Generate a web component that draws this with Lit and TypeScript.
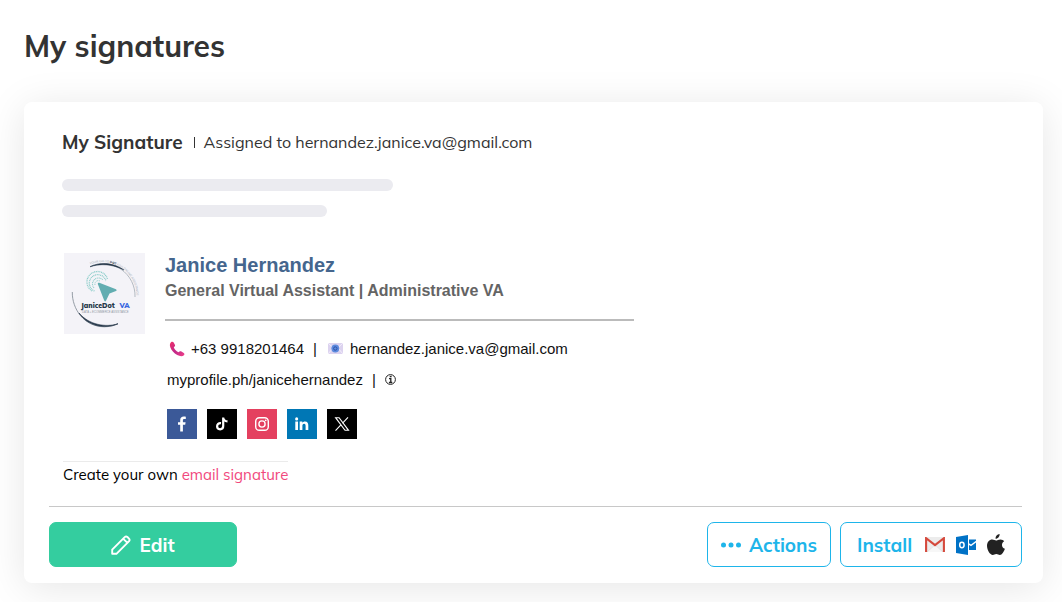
import { LitElement, html, css, svg } from "lit";
import { customElement } from "lit/decorators.js";

const logo = svg`
<svg class="logo" viewBox="0 0 81 81" role="img" aria-label="JaniceDot VA">
  <defs>
    <path id="ring" d="M26 11.500 A34 34 0 0 1 72.500 45" />
  </defs>
  <rect width="81" height="81" fill="#f4f3f8" />
  <path d="M26 13.500 A32 32 0 0 1 71 44" fill="none" stroke="#a3abb4" stroke-width=".8" />
  <path d="M26 13.800 C34 9.500 48 8.500 60 17 C48 10.800 36 10.500 26 13.800Z" fill="#26384a" stroke="#26384a" stroke-width=".5" />
  <path d="M8.300 39 C8 56 20 73.500 40 73.800 C46 73.800 50 72.500 54 70.500" fill="none" stroke="#7c8791" stroke-width=".8" />
  <path d="M15 60 C23 72.500 40 77 54 70.800 C42 74.500 25 72 15 60Z" fill="#26384a" stroke="#26384a" stroke-width=".6" />
  <g fill="none" stroke="#8ccdca" stroke-dasharray="1 .7">
    <path d="M31 32 A3.500 3.500 0 0 1 36 28" stroke-width="1" />
    <path d="M30 35 A6 6 0 0 1 39 27" stroke-width="1.100" />
    <path d="M30.500 38 A8.500 8.500 0 1 1 42 28" stroke-width="1.300" />
    <path d="M28 38 A10.500 10.500 0 1 1 43.500 26" stroke-width="1.300" />
  </g>
  <path d="M33.800 31 Q33.500 29.300 35.300 29.800 L52 36.300 Q53.500 37.200 52 38 L45.500 40.500 L42 47.800 Q41.200 49 40.300 47.800Z" fill="#62adb1" />
  <text font-family="Liberation Sans" font-size="3" fill="#a3abb4"><textPath href="#ring">YOUR GO-TO <tspan font-weight="bold" fill="#26384a">DOT</tspan> FOR ONLINE ASSISTANCE</textPath></text>
  <text x="17" y="55" font-family="Mulish, Lato" font-weight="900" font-size="7" fill="#26384a">JaniceDot</text>
  <text x="55.500" y="55" font-family="Mulish, Lato" font-weight="900" font-size="7" fill="#3566e0">VA</text>
  <text x="18" y="59.500" font-family="Liberation Sans" font-size="2.800" fill="#8f98a2">DATA + ECOMMERCE ASSISTANCE</text>
</svg>`;

const phoneIcon = svg`
<svg class="phone" viewBox="0 0 16 16" aria-hidden="true">
  <defs><linearGradient id="pg" x1="0" y1="0" x2="1" y2="1"><stop offset="0" stop-color="#f0306a" /><stop offset=".5" stop-color="#c02888" /><stop offset="1" stop-color="#f04088" /></linearGradient></defs>
  <path d="M2 1.200 C3 .5 4 .6 4.700 1.500 L6 4 C6.300 5 5.600 5.600 4.800 6.300 C5.500 8.600 7.500 10.600 9.600 11.300 C10.300 10.300 11 9.900 12 10.300 L14.800 12 C15.600 12.700 15.600 13.600 14.900 14.300 C13.500 15.700 10.800 15.500 8.200 14.100 C4.900 12.300 2.300 9.300 1.300 6.300 C.6 4.200.8 2.300 2 1.200Z" fill="url(#pg)" />
</svg>`;

const mailIcon = svg`
<svg class="mail" viewBox="0 0 15 11" aria-hidden="true">
  <rect width="15" height="11" fill="#dcd3ef" />
  <path d="M0 0 L7.500 7 L15 0 M0 11 L5 5 M15 11 L10 5" fill="none" stroke="#f3edfb" />
  <circle cx="7.300" cy="5.500" r="3.900" fill="#5c8ade" />
  <circle cx="7.300" cy="5.500" r="1.700" fill="none" stroke="#2b4fa5" stroke-width="1" />
</svg>`;

const infoIcon = svg`
<svg class="info" viewBox="0 0 11 11" aria-hidden="true">
  <circle cx="5.500" cy="5.500" r="4.900" fill="none" stroke="#222" stroke-width="1" />
  <rect x="4.700" y="1.800" width="1.900" height="1.500" fill="#222" />
  <path d="M4 4.600 H5.800 V8.300 M3.900 8.500 H7.300" fill="none" stroke="#222" stroke-width="1.300" />
</svg>`;

const socials = [
  { name: "Facebook", cls: "facebook", art: svg`<path fill="#fff" d="M13.200 22.500V15.800H11V13.200h2.200v-2c0-2.400 1.400-3.700 3.600-3.700.9 0 1.700.1 2 .2v2.300h-1.500c-1.100 0-1.400.6-1.400 1.400v1.800h2.700l-.4 2.600h-2.300v6.700z" />` },
  { name: "TikTok", cls: "tiktok", art: svg`<path fill="none" stroke="#fff" stroke-width="2.200" d="M14 14.200c-2.500-.3-3.900 1.200-3.900 3.100 0 1.800 1.300 3 3 3s3.100-1.200 3.100-3.200V8.500c.2 2.300 1.900 3.800 4.300 3.900" />` },
  { name: "Instagram", cls: "instagram", art: svg`<rect x="8.700" y="8.700" width="12.600" height="12.600" rx="3.600" fill="none" stroke="#fff" stroke-width="1.400" /><circle cx="15" cy="15" r="3.100" fill="none" stroke="#fff" stroke-width="1.400" /><circle cx="18.700" cy="11.300" r=".9" fill="#fff" />` },
  { name: "LinkedIn", cls: "linkedin", art: svg`<path fill="#fff" d="M8.300 12.600h2.700V21H8.300zM12.700 12.600h2.600v1.200c.5-.8 1.400-1.400 2.700-1.400 2.600 0 3.300 1.700 3.300 4V21h-2.700v-4.100c0-1.100-.2-2.200-1.500-2.200s-1.700 1-1.700 2.200V21h-2.700z" /><circle cx="9.650" cy="9.900" r="1.550" fill="#fff" />` },
  { name: "X", cls: "x", art: svg`<path fill="none" stroke="#fff" stroke-width="1.100" d="M8.600 8.700h3.500l9.400 12.600H18zM21 8.300l-5.600 6M13.900 15.900l-5.400 5.700" />` },
];

const pencilIcon = svg`
<svg class="pencil" viewBox="0 0 20 20" fill="none" stroke="#fff" stroke-width="1.900" stroke-linejoin="round" aria-hidden="true">
  <path d="M1.200 18.800 V14.600 L13.700 2.100 Q15 .8 16.400 2 L18 3.600 Q19.200 5 17.900 6.300 L5.400 18.800Z M12.300 3.800 L16.200 7.700" />
</svg>`;

const gmailIcon = svg`
<svg class="gmail" viewBox="0 0 20 15" aria-hidden="true">
  <rect x="1" width="18" height="15" rx="1" fill="#ececec" />
  <path d="M2 15 L10 8 L18 15" fill="#f7f7f7" stroke="#d5d5d5" stroke-width=".5" />
  <path d="M1.100 15 V1.200 L10 8.200 L18.900 1.200 V15" fill="none" stroke="#d5493c" stroke-width="2.100" />
</svg>`;

const outlookIcon = svg`
<svg class="outlook" viewBox="0 0 20 20" aria-hidden="true">
  <path fill="#0072c6" d="M0 2 L12 0 V20 L0 18Z" />
  <path fill="#0072c6" d="M13 4.500 H20 V5.800 L15 9.600 L13 8.300Z M13 10 L15 11.300 L20 7.500 V15 H13Z" />
  <ellipse cx="5.900" cy="10" rx="2.200" ry="2.700" fill="none" stroke="#fff" stroke-width="1.500" />
</svg>`;

const appleIcon = svg`
<svg class="apple" viewBox="0 0 18 21" aria-hidden="true">
  <path fill="#222" d="M12.600 0c.2 2.500-1.600 4.700-4 4.800C8.300 2.400 10.300.3 12.600 0zM17.200 7.200c-3.300 2-2.700 6.400.7 7.600-1.100 3-2.900 6.200-5 6.200-1.400 0-2-.9-3.600-.9s-2.200.9-3.500.9C3 21 0 16 0 11.800 0 7.800 2.500 5.500 5.200 5.500c1.600 0 2.900 1 3.900 1 .9 0 2.500-1.100 4.400-1.100 1.500 0 2.900.7 3.700 1.800z" />
</svg>`;

@customElement("app-root")
export class AppRoot extends LitElement {
  static styles = css`
    :host {
      display: block;
      min-height: 100vh;
      box-sizing: border-box;
      overflow: hidden;
      padding: 24px 19px 19px 24px;
      background: #fff;
      color: #333;
      font-family: Mulish, Muli, Lato, sans-serif;
    }
    .title { margin: 0; font-size: 30px; line-height: 44px; font-weight: 700; }
    .card {
      margin-top: 34px;
      padding: 25px 21px 16px 25px;
      border-radius: 8px;
      background: #fff;
      box-shadow: 0 5px 40px rgba(0, 0, 0, 0.1);
    }
    .content { padding: 0 13px; }
    .heading { display: flex; align-items: center; line-height: 30px; }
    .heading h2 { margin: 0; font-size: 19px; line-height: 30px; }
    .bar { width: 1px; height: 11px; margin: 0 9px 0 11px; background: #333; }
    .assigned { font-size: 16px; }
    .skeleton { display: grid; gap: 14px; margin-top: 22px; }
    .skeleton span { height: 12px; max-width: 100%; border-radius: 6px; background: #ebebf0; }
    .long { width: 331px; }
    .short { width: 265px; }
    .signature {
      display: flex;
      align-items: flex-start;
      gap: 20px;
      padding: 36px 2px 0;
      font-family: "Liberation Sans", Arial, sans-serif;
    }
    .logo { width: 81px; height: 81px; flex: none; }
    .details { flex: 0 1 469px; }
    .name { margin: 0; font-size: 20px; line-height: 25px; color: #45668e; font-weight: 700; }
    .role { margin: 0; font-size: 16px; line-height: 26px; color: #646464; font-weight: 700; white-space: nowrap; }
    .rule { margin: 15px 0 12px; border: 0; border-top: 2px solid #bbb; }
    .line { display: flex; align-items: center; padding-left: 2px; font-size: 15px; line-height: 31px; white-space: nowrap; }
    .line a { color: #111; text-decoration: none; }
    .sep { margin: 0 9px; color: #111; }
    .phone { width: 16px; height: 16px; margin: 0 6px 0 2px; }
    .mail { width: 15px; height: 11px; margin: 0 7px 0 2px; }
    .info { width: 11px; height: 11px; }
    .socials { display: flex; gap: 10px; padding: 14px 0 0 2px; }
    .socials a { display: block; width: 30px; height: 30px; }
    .socials svg { display: block; }
    .facebook { background: #3b5998; }
    .tiktok, .x { background: #000; }
    .instagram { background: #e4405f; }
    .linkedin { background: #0077b5; }
    .promo {
      width: fit-content;
      margin: 22px 0 0 1px;
      border-top: 1px solid #ebebeb;
      font-size: 15px;
      line-height: 25px;
      color: #000;
    }
    .promo a { color: #f1487d; text-decoration: none; }
    .actions {
      display: flex;
      gap: 9px;
      margin-top: 19px;
      padding-top: 15px;
      border-top: 1px solid #c8c8c8;
    }
    button {
      display: flex;
      align-items: center;
      justify-content: center;
      box-sizing: border-box;
      height: 45px;
      margin: 0;
      border: 1px solid #1eb5ea;
      border-radius: 7px;
      background: #fff;
      color: #1eb5ea;
      font: 700 19px Mulish, Muli, Lato, sans-serif;
      cursor: pointer;
    }
    .edit { width: 188px; margin-right: auto; gap: 8px; border-color: #34cd9f; background: #34cd9f; color: #fff; }
    .more { width: 124px; gap: 8px; padding: 0; }
    .install { width: 182px; padding: 0 16px; justify-content: space-between; }
    .pencil { width: 20px; height: 20px; }
    .dots { width: 20px; height: 6px; }
    .apps { display: flex; align-items: center; gap: 11px; }
    .gmail { width: 20px; height: 15px; }
    .outlook { width: 20px; height: 20px; }
    .apple { width: 18px; height: 21px; }
  `;

  render() {
    return html`
      <h1 class="title">My signatures</h1>
      <main class="card">
        <div class="content">
          <div class="heading">
            <h2>My Signature</h2>
            <span class="bar"></span>
            <span class="assigned">Assigned to hernandez.janice.va@gmail.com</span>
          </div>
          <div class="skeleton"><span class="long"></span><span class="short"></span></div>
          <div class="signature">
            ${logo}
            <div class="details">
              <h3 class="name">Janice Hernandez</h3>
              <p class="role">General Virtual Assistant | Administrative VA</p>
              <hr class="rule" />
              <div class="line">
                ${phoneIcon}<a href="tel:+639918201464">+63 9918201464</a><span class="sep">|</span>
                ${mailIcon}<a href="mailto:hernandez.janice.va@gmail.com">hernandez.janice.va@gmail.com</a>
              </div>
              <div class="line">
                <a href="https://myprofile.ph/janicehernandez">myprofile.ph/janicehernandez</a><span class="sep">|</span>${infoIcon}
              </div>
              <div class="socials">
                ${socials.map((s) => html`<a class=${s.cls} href="#" aria-label=${s.name}><svg width="30" height="30" viewBox="0 0 30 30">${s.art}</svg></a>`)}
              </div>
            </div>
          </div>
          <p class="promo">Create your own <a href="#">email signature</a></p>
        </div>
        <div class="actions">
          <button class="edit">${pencilIcon}Edit</button>
          <button class="more">
            <svg class="dots" viewBox="0 0 20 6" fill="currentColor" aria-hidden="true"><circle cx="2.500" cy="3" r="2.500" /><circle cx="10" cy="3" r="2.500" /><circle cx="17.500" cy="3" r="2.500" /></svg>Actions
          </button>
          <button class="install">Install<span class="apps">${gmailIcon}${outlookIcon}${appleIcon}</span></button>
        </div>
      </main>
    `;
  }
}
